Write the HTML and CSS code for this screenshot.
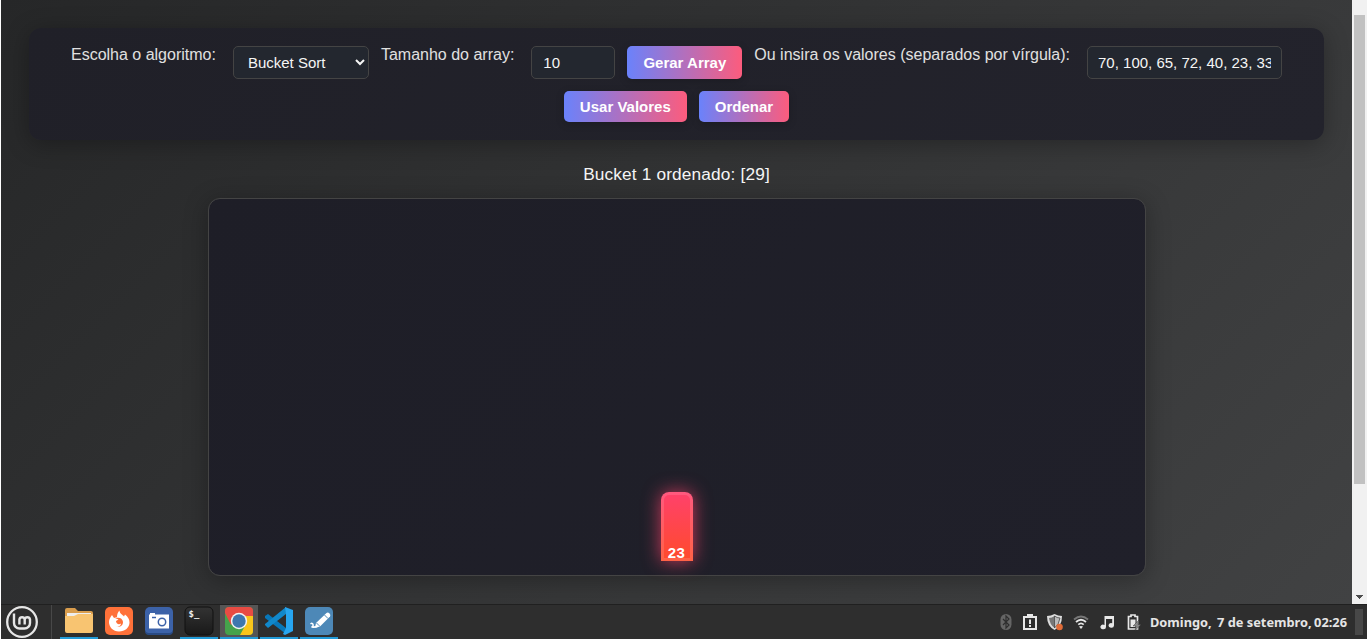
FILE: index.html
```
<!DOCTYPE html>
<html lang="pt-BR">
<head>
<meta charset="utf-8">
<title>Algoritmos de Ordenação</title>
<link rel="stylesheet" href="styles.css">
</head>
<body>
<div class="browser">
  <main class="page">
    <section class="controls">
      <label class="label" for="algo">Escolha o algoritmo:</label>
      <select class="field field-select" id="algo"><option>Bucket Sort</option></select>
      <label class="label" for="size">Tamanho do array:</label>
      <input class="field field-size" id="size" value="10">
      <button class="btn btn-generate">Gerar Array</button>
      <label class="label" for="values">Ou insira os valores (separados por vírgula):</label>
      <input class="field field-values" id="values" value="70, 100, 65, 72, 40, 23, 33, 29">
      <button class="btn btn-short">Usar Valores</button>
      <button class="btn btn-short">Ordenar</button>
    </section>
    <p class="status">Bucket 1 ordenado: [29]</p>
    <section class="chart"><div class="bar">23</div></section>
  </main>
  <div class="scrollbar"><div class="thumb"></div><svg class="down" viewBox="0 0 9 5"><path d="M1 0h7v1H7v1H6v1H5v1H4V3H3V2H2V1H1z" fill="#4d4d4d"/></svg></div>
</div>
<footer class="taskbar">
  <div class="menu"><svg width="32" height="32" viewBox="0 0 32 32" fill="none" stroke="#e6e6e6"><circle cx="16" cy="16" r="14.8" stroke-width="2.3"/><path d="M8 7.500V17a5.500 5.500 0 0 0 5.500 5.500h5A5.500 5.500 0 0 0 24 17v-3.500a2.700 2.700 0 0 0-5.300 0v5M18.700 13.500a2.700 2.700 0 0 0-5.300 0v5" stroke-width="2.400"/></svg></div>
  <div class="apps">
    <div class="app open"><svg width="30" height="30" viewBox="0 0 30 30"><path d="M1 4q0-2 2-2h8l3 3h13q2 0 2 2v4H1z" fill="#d99d4d"/><path d="M3 7h24v5H3z" fill="#eee"/><path d="M1 10h9l4-2h15v17q0 2-2 2H3q-2 0-2-2z" fill="#f8c471"/></svg></div>
    <div class="app"><svg width="30" height="30" viewBox="0 0 30 30"><rect x="1" y="1" width="28" height="28" rx="5" fill="#ff7139"/><path d="M15.500 4.500c0 3 3 4 4.500 6l1-2c3 2 4.500 5 4.500 8 0 5-4.500 9-10.500 9S5 21 5 16c0-3 1.500-5 3-7l2 3 3-1c0-3 1-5 2.500-6.500z" fill="#fff"/><path d="M11 12l3.500 1.500-2.500 1.500c0 3 3 4 5 2.500 0 2.500-3 3.500-5 2.500 3 2 7 0 7-3.500 0-2-1-3.500-3-4.500-2 0-3.500-.500-5 0z" fill="#ff7139"/></svg></div>
    <div class="app"><svg width="30" height="30" viewBox="0 0 30 30"><rect x="1" y="1" width="28" height="28" rx="5" fill="#3c62a8"/><path d="M1 24v1a4 4 0 0 0 4 4h20a4 4 0 0 0 4-4v-1a4 4 0 0 1-4 3H5a4 4 0 0 1-4-3z" fill="#294a83"/><path d="M6 7h5v1.500h14v14H5v-14h1z" fill="#fff"/><circle cx="18" cy="16" r="3.700" fill="#fff" stroke="#3c62a8" stroke-width="1.500"/><path d="M8 11.500h4" stroke="#3c62a8" stroke-width="1.500"/></svg></div>
    <div class="app open"><svg width="30" height="30" viewBox="0 0 30 30"><defs><linearGradient id="term" x2="0" y2="1"><stop stop-color="#333"/><stop offset="1" stop-color="#191919"/></linearGradient></defs><rect x="1" y="1" width="28" height="28" rx="5" fill="url(#term)" stroke="#111"/><text x="4.500" y="11" class="prompt">$_</text></svg></div>
    <div class="app open active"><svg width="30" height="30" viewBox="0 0 30 30"><defs><clipPath id="tile"><rect x="1" y="1" width="28" height="28" rx="4"/></clipPath></defs><g clip-path="url(#tile)"><path d="M1 1h28v28H1z" fill="#45a34b"/><path d="M1 1h28v9H15l-8 9L1 7z" fill="#e84b43"/><path d="M15 10h14v19H16l6-11z" fill="#f9c51b"/></g><circle cx="15" cy="15" r="8.200" fill="#f3f3f3"/><circle cx="15" cy="15" r="6.700" fill="#3e77ae"/></svg></div>
    <div class="app open"><svg width="30" height="30" viewBox="0 0 30 30"><path d="M1 10l3-2 18 14v6L1 12z" fill="#0877b9"/><path d="M1 19l3 3L22 8V1L1 18z" fill="#1188cb"/><path d="M21 1l8 3v21l-8 4-2-1 3-6V8z" fill="#27a5ef"/></svg></div>
    <div class="app open"><svg width="30" height="30" viewBox="0 0 30 30"><rect x="1" y="1" width="28" height="28" rx="5" fill="#4d88b7"/><path d="M12 17L22.500 7q1.500-1 3 .500t.500 3L16 20.500l-5 1z" fill="#fff"/><path d="M12.500 17l3.500 3.500M20.500 9l3.500 3.500" stroke="#4d88b7"/><path d="M6.500 18q2-1.500 2.500.500t-1.500 2.500q4 .500 7-1" fill="none" stroke="#fff" stroke-width="1.500"/></svg></div>
  </div>
  <div class="tray">
    <svg width="12" height="18" viewBox="0 0 12 18"><rect y="1" x=".5" width="11" height="16" rx="5.500" fill="#656565"/><path d="M3 6l6 6-3 3V3l3 3-6 6" fill="none" stroke="#2e2e2e" stroke-width="1.200"/></svg>
    <svg width="14" height="18" viewBox="0 0 14 18"><path d="M1 4h12v12H1z" fill="none" stroke="#e8e8e8" stroke-width="2"/><path d="M4 1h6v3H4zM6 6.500h2v4.500H6zM6 12h2v2H6z" fill="#e8e8e8"/></svg>
    <svg width="18" height="18" viewBox="0 0 18 18"><path d="M1 3q4 0 7.500-2Q12 3 16 3q0 10-7.500 14Q1 13 1 3z" fill="#ddd"/><path d="M3 5q3 0 5.500-2v12Q4 12 3 5z" fill="#777"/><path d="M8.500 3Q11 5 14 5q-1 7-5.500 10z" fill="#bbb" stroke="#333" stroke-width=".7"/><circle cx="13.500" cy="14" r="3.300" fill="#e16c38"/></svg>
    <svg width="16" height="18" viewBox="0 0 16 18" fill="none" stroke-width="1.800"><path d="M1 6.500q7-6 14 0" stroke="#777"/><path d="M3 9q5-4.500 10 0M5.300 11.600q2.700-2.500 5.400 0" stroke="#e8e8e8"/><path d="M6 13.500q2-1 4 0L8 16z" fill="#e8e8e8"/></svg>
    <svg width="14" height="18" viewBox="0 0 14 18"><path d="M4.500 3H14v9.500a2.700 2.300 0 1 1-1.800-2.300V6H6v8a2.800 2.300 0 1 1-1.500-2z" fill="#e8e8e8"/></svg>
    <svg width="16" height="18" viewBox="0 0 16 18"><path d="M5 2h4v1.500h2.500V16h-9V3.500H5z" fill="none" stroke="#e8e8e8" stroke-width="1.700"/><path d="M4.500 6.500h5V14h-5z" fill="#e8e8e8"/><path d="M13 7l-6 6h3l-1 4.500 6-6h-3z" fill="#888" stroke="#2e2e2e" stroke-width=".4"/></svg>
  </div>
  <div class="clock"><span>Domingo,</span><span class="day">7 de setembro,</span><span>02:26</span></div>
  <div class="desktop"></div>
</footer>
</body>
</html>
```
FILE: styles.css
```
* { box-sizing: border-box; }
body {
  margin: 0;
  height: 639px;
  padding-left: 1px;
  overflow: hidden;
  background: #fff;
  font-family: "Liberation Sans", Arial, sans-serif;
  display: flex;
  flex-direction: column;
}
.browser { height: 604px; display: flex; }
.page {
  width: 1351px;
  height: 604px;
  padding: 28px 28px 0;
  overflow: hidden;
  background: linear-gradient(135deg, #262728, #414243);
  color: #f5f5f5;
}
.controls {
  height: 112px;
  padding: 18px;
  display: flex;
  flex-wrap: wrap;
  justify-content: center;
  align-content: flex-start;
  gap: 12px;
  border-radius: 12px;
  background: linear-gradient(135deg, #202028, #23232c);
  box-shadow: 0 4px 24px rgba(0, 0, 0, .3);
}
.label { margin-right: 5px; font-size: 16px; line-height: 18px; color: #e0e0e0; white-space: nowrap; }
.field {
  height: 33px;
  margin: 0;
  padding: 0 10px;
  border: 1px solid #444;
  border-radius: 5px;
  background-color: #23272f;
  color: #f5f5f5;
  font: 15px "Liberation Sans", Arial, sans-serif;
  outline: 0;
}
.field-select { width: 136px; padding: 0 0 0 10px; }
.field-size { width: 84px; padding-left: 11px; }
.field-values { width: 195px; }
.btn {
  height: 33px;
  margin: 0;
  padding: 0 16px;
  border: 0;
  border-radius: 5px;
  background: linear-gradient(90deg, #6a82fb, #fc5c7d);
  box-shadow: 0 2px 8px rgba(0, 0, 0, .2);
  color: #fff;
  font: bold 15px "Liberation Sans", Arial, sans-serif;
  white-space: nowrap;
}
.btn-generate { width: 115px; }
.btn-short { height: 31px; }
.status { margin: 24px 0 14px; font-size: 17.3px; letter-spacing: .14px; line-height: 20px; text-align: center; }
.chart {
  width: 938px;
  height: 378px;
  margin: 0 auto;
  padding-bottom: 14px;
  display: flex;
  justify-content: center;
  align-items: flex-end;
  border: 1px solid #444;
  border-radius: 12px;
  background: linear-gradient(135deg, #1e1e27, #20202a);
  box-shadow: 0 4px 24px rgba(0, 0, 0, .3);
}
.bar {
  width: 32px;
  height: 69px;
  display: flex;
  justify-content: center;
  align-items: flex-end;
  border: 3px solid rgba(255, 255, 255, .13);
  border-radius: 8px 8px 0 0;
  background: linear-gradient(#ff416c, #ff4b2b) border-box;
  box-shadow: 0 0 18px rgba(255, 65, 108, .75);
  font-size: 15px;
  font-weight: bold;
  line-height: 10px;
  letter-spacing: .3px;
  color: #fff;
}
.scrollbar {
  width: 15px;
  padding: 15px 2px 4px;
  display: flex;
  flex-direction: column;
  align-items: center;
  justify-content: space-between;
  background: #f1f1f1;
}
.thumb { width: 11px; height: 469px; background: #c1c1c1; }
.down { width: 9px; height: 5px; }
.taskbar {
  height: 35px;
  display: flex;
  align-items: center;
  background: #2e2e2e;
  border-top: 1px solid #202020;
}
.menu { width: 51px; height: 34px; padding: 1px 0 0 5px; border-right: 1px solid #484848; }
.apps { display: flex; gap: 2px; margin-left: 8px; }
.app { width: 38px; height: 34px; padding: 1px 4px 0; border-bottom: 2px solid transparent; }
.app svg { display: block; }
.open { border-color: #229bd8; }
.active { background: #555; }
.prompt { font: bold 9px "DejaVu Sans Mono", monospace; fill: #f0f0f0; }
.tray { display: flex; gap: 11px; margin-left: auto; margin-right: 8px; }
.tray svg:nth-child(3) { margin-left: -2px; margin-right: -2px; }
.tray svg:nth-child(6) { margin-left: 1px; }
.clock {
  width: 197px;
  display: flex;
  justify-content: space-between;
  color: #e5e5e5;
  font: bold 12.8px "Noto Sans", sans-serif;
  white-space: nowrap;
}
.day { margin-left: 3px; }
.desktop { width: 8px; height: 26px; margin-left: 8px; margin-right: 4px; background: #484848; }
```
